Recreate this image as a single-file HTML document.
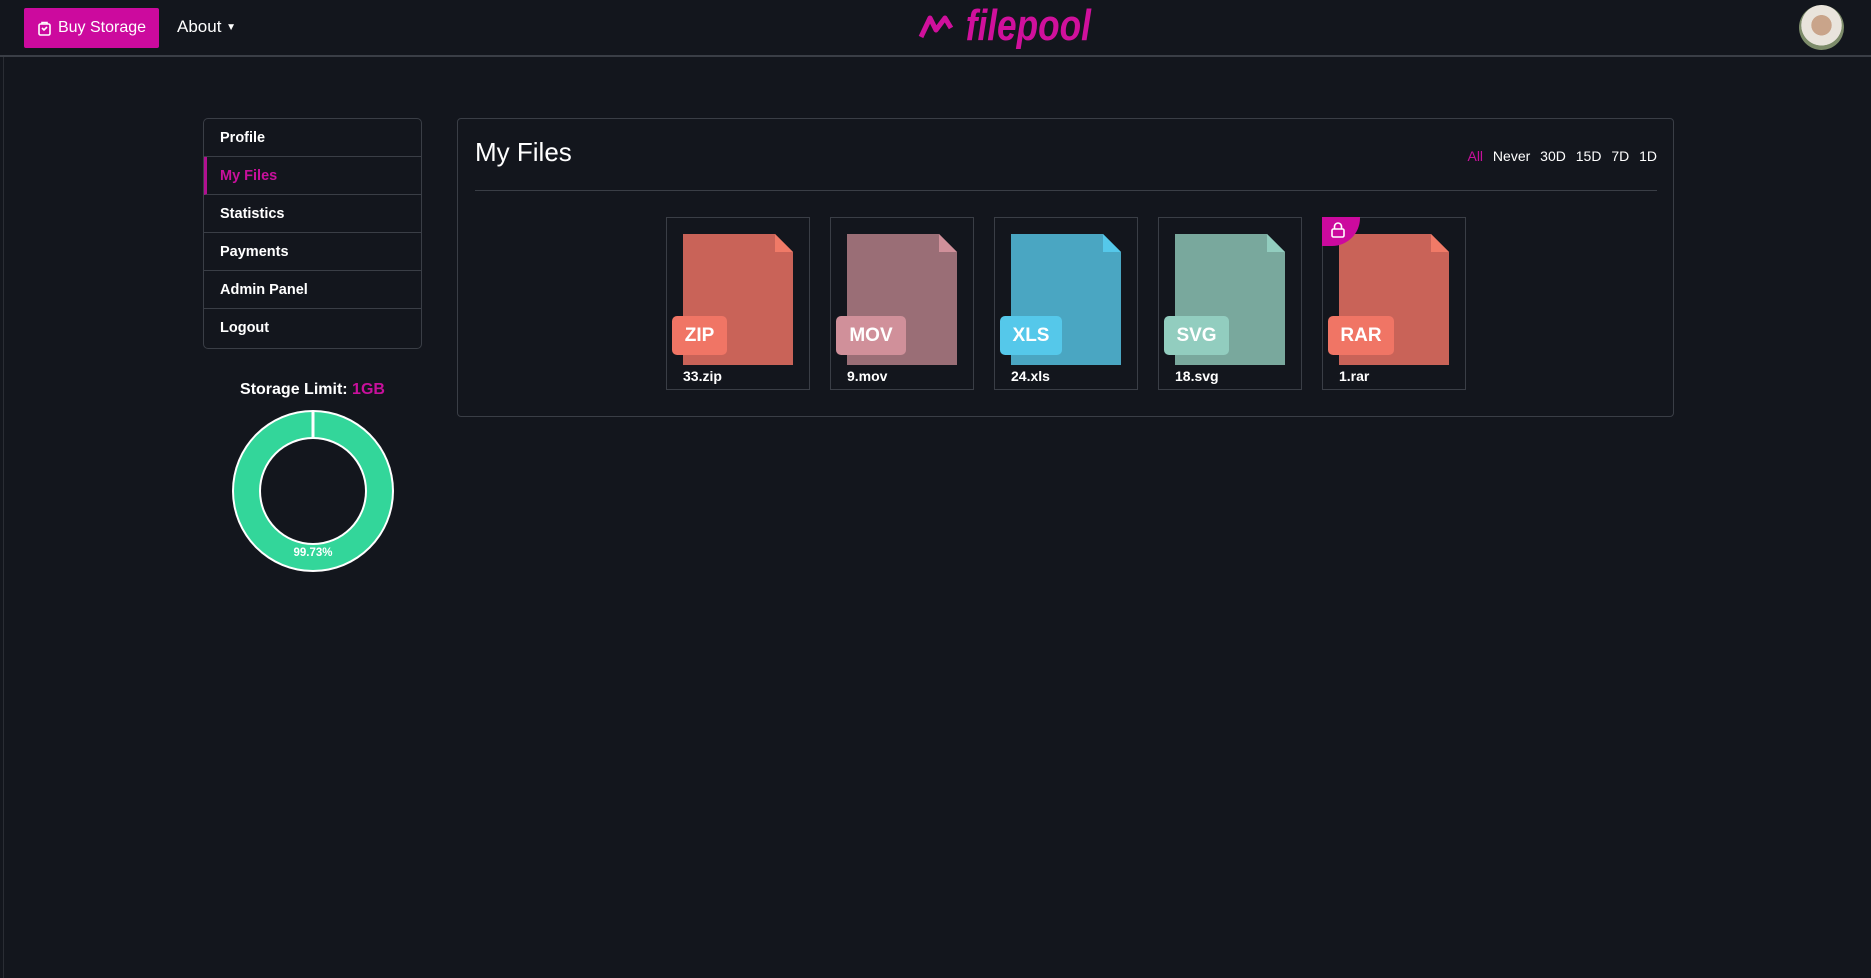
<!DOCTYPE html>
<html><head><meta charset="utf-8"><style>
*{box-sizing:border-box;margin:0;padding:0}
body{width:1871px;height:978px;background:#13161d;font-family:"Liberation Sans",sans-serif;color:#fff;position:relative;overflow:hidden}
.nav{position:absolute;left:0;top:0;width:1871px;height:57px;border-bottom:2px solid #3a3e46}
.leftline{position:absolute;left:3px;top:57px;width:1px;height:921px;background:#2a2d34}
.btn{position:absolute;left:24px;top:8px;width:135px;height:40px;background:#cc0a9e;border-radius:2px;font-size:16px;display:flex;align-items:center;justify-content:center;gap:6px}
.about{position:absolute;left:177px;top:17px;font-size:17px}
.logo{position:absolute;left:918px;top:0px;height:52px;display:flex;align-items:center;color:#d0109c}
.logo span{font-size:44px;font-weight:bold;font-style:italic;display:inline-block;transform:scaleX(.8);transform-origin:left;letter-spacing:0px}
.avatar{position:absolute;left:1799px;top:5px;width:45px;height:45px;border-radius:50%;background:radial-gradient(circle at 50% 45%,#c9a48a 0 30%,#e9e4dc 31% 60%,#7d8c6a 61%)}
.side{position:absolute;left:203px;top:118px;width:219px;border:1px solid #3a3e46;border-radius:5px;overflow:hidden}
.side div{height:38px;border-bottom:1px solid #3a3e46;padding-left:16px;line-height:38px;font-size:14.5px;font-weight:bold}
.side div:last-child{border-bottom:none;height:39px}
.side .act{color:#c8109c;border-left:3px solid #b01090;padding-left:13px}
.sl{position:absolute;left:203px;width:219px;top:381px;text-align:center;font-size:16px;font-weight:bold}
.panel{position:absolute;left:457px;top:118px;width:1217px;height:299px;border:1px solid #3a3e46;border-radius:4px}
.title{position:absolute;left:17px;top:18px;font-size:26px}
.filt{position:absolute;right:16px;top:29px;font-size:14px;word-spacing:6px}
.hr{position:absolute;left:17px;right:16px;top:71px;height:1px;background:#3a3e46}
.card{position:absolute;top:98px;width:144px;height:173px;border:1px solid #3a3e46}
.doc{position:absolute;left:16px;top:16px;width:110px;height:131px;clip-path:polygon(0 0,92px 0,110px 18px,110px 131px,0 131px)}
.fold{position:absolute;left:108px;top:16px;width:18px;height:18px;clip-path:polygon(0 0,100% 100%,0 100%)}
.badge{position:absolute;left:5px;top:98px;width:55px;height:39px;border-radius:5px;font-size:19px;line-height:39px;text-align:center;font-weight:600}
.lbl{position:absolute;left:16px;top:150px;font-size:14px;font-weight:bold}
.lock{position:absolute;left:-1px;top:-1px;width:38px;height:29px;background:#cc0a9e;border-bottom-right-radius:28px}
</style></head><body>
<div class="nav"></div><div class="leftline"></div>
<div class="btn"><svg width="15" height="16" viewBox="0 0 15 16" fill="none" stroke="#fff" stroke-width="1.6"><rect x="2" y="4" width="11" height="11" rx="1.5"/><path d="M5 4V2.5h5V4M5 8l2 2 3-3"/></svg>Buy Storage</div>
<div class="about">About <span style="font-size:10px;vertical-align:2px">▼</span></div>
<div class="logo"><svg width="38" height="30" viewBox="0 0 38 30"><path d="M3 26L12 7l6 12L27 7l6 10" stroke="#d0109c" stroke-width="5" fill="none" stroke-linejoin="round"/></svg><span>&nbsp;filepool</span></div>
<div class="avatar"></div>
<div class="side"><div>Profile</div><div class="act">My Files</div><div>Statistics</div><div>Payments</div><div>Admin Panel</div><div>Logout</div></div>
<div class="sl">Storage Limit: <span style="color:#c8109c">1GB</span></div>
<svg style="position:absolute;left:230px;top:408px" width="166" height="166" viewBox="0 0 166 166"><circle cx="83" cy="83" r="81" fill="#fff"/><circle cx="83" cy="83" r="79" fill="#33d69a"/><circle cx="83" cy="83" r="54" fill="#fff"/><circle cx="83" cy="83" r="52" fill="#13161d"/><rect x="81.5" y="3" width="3" height="28" fill="#fff"/><text x="83" y="148" text-anchor="middle" font-size="11.5" font-weight="bold" fill="#fff" font-family="Liberation Sans">99.73%</text></svg>
<div class="panel">
<div class="title">My Files</div>
<div class="filt"><span style="color:#c8109c">All</span> Never 30D 15D 7D 1D</div>
<div class="hr"></div>
<div class="card" style="left:208px"><div class="doc" style="background:#c96358"></div><div class="fold" style="background:#f07a67"></div><div class="badge" style="background:#f07565">ZIP</div><div class="lbl">33.zip</div></div>
<div class="card" style="left:372px"><div class="doc" style="background:#9a6e76"></div><div class="fold" style="background:#d0909a"></div><div class="badge" style="background:#d0909a;width:70px">MOV</div><div class="lbl">9.mov</div></div>
<div class="card" style="left:536px"><div class="doc" style="background:#4aa6c2"></div><div class="fold" style="background:#55c8ea"></div><div class="badge" style="background:#55c8ea;width:62px">XLS</div><div class="lbl">24.xls</div></div>
<div class="card" style="left:700px"><div class="doc" style="background:#79a89d"></div><div class="fold" style="background:#92cdbf"></div><div class="badge" style="background:#92cdbf;width:65px">SVG</div><div class="lbl">18.svg</div></div>
<div class="card" style="left:864px"><div class="doc" style="background:#c96358"></div><div class="fold" style="background:#f07a67"></div><div class="badge" style="background:#f07565;width:66px">RAR</div><div class="lbl">1.rar</div><div class="lock"><svg style="position:absolute;left:9px;top:5px" width="14" height="16" viewBox="0 0 14 16" fill="none" stroke="#fff" stroke-width="1.6"><rect x="1" y="7" width="12" height="8" rx="1.5"/><path d="M3.5 7V4.5a3.5 3.5 0 0 1 7 0V7"/></svg></div></div>
</div>
</body></html>
